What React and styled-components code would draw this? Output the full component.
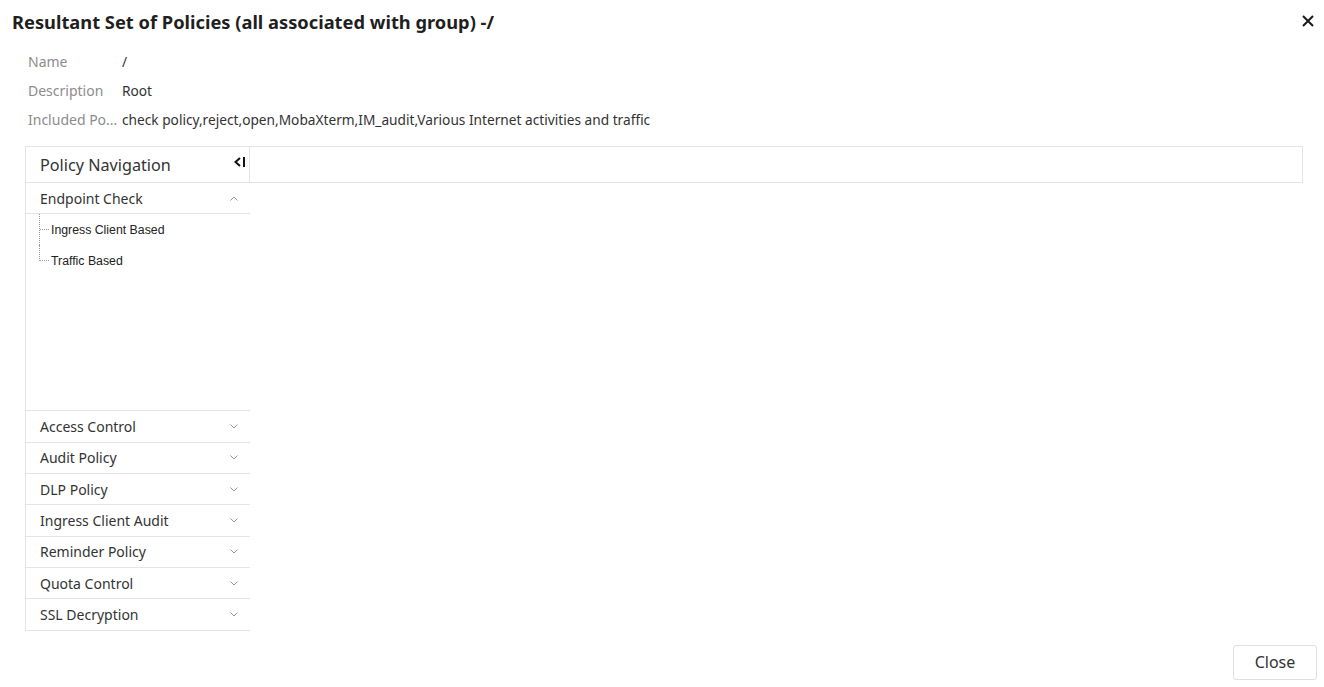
import React from "react";
import styled, { createGlobalStyle } from "styled-components";

const Global = createGlobalStyle`
  html, body { margin: 0; padding: 0; background: #fff; }
  body { font-family: "Noto Sans", "Open Sans", sans-serif; color: #333; }
  * { box-sizing: border-box; }
`;

const Dialog = styled.div`
  width: 1324px;
  height: 687px;
  display: flex;
  flex-direction: column;
  background: #fff;
`;

const Header = styled.div`
  height: 43px;
  display: flex;
  align-items: center;
  justify-content: space-between;
  padding: 0 8px 0 12px;
`;

const Title = styled.h1`
  margin: 0;
  font-size: 18.3px;
  font-weight: 700;
  color: #1f1f1f;
`;

const CloseX = styled.button`
  border: 0;
  background: none;
  padding: 0;
  width: 16px;
  height: 16px;
  display: flex;
  align-items: center;
  justify-content: center;
  cursor: pointer;
`;

const Body = styled.div`
  flex: 1;
  padding: 9px 21px 0 25px;
  display: flex;
  flex-direction: column;
`;

const InfoList = styled.div`
  display: grid;
  grid-template-columns: 94px 1fr;
  row-gap: 7px;
  padding-left: 3px;
  margin-bottom: 15px;
`;

const Label = styled.div`
  font-size: 14px;
  line-height: 22px;
  color: #8c8c8c;
  white-space: nowrap;
`;

const Value = styled.div`
  font-size: 13.7px;
  line-height: 22px;
  color: #333;
`;

const Split = styled.div`
  display: flex;
  align-items: flex-start;
`;

const Nav = styled.div`
  width: 225px;
  border-left: 1px solid #e2e3ec;
  display: flex;
  flex-direction: column;
`;

const NavHead = styled.div`
  height: 37px;
  display: flex;
  align-items: center;
  justify-content: space-between;
  padding: 0 3px 0 14px;
  border-top: 1px solid #e2e3ec;
  border-bottom: 1px solid #e2e3ec;
  font-size: 16.2px;
  color: #333;
`;

const CollapseIcon = styled.span`
  display: flex;
  align-items: center;
  margin-top: -5px;
`;

const Section = styled.div`
  height: ${(p) => p.$h || 31.3}px;
  border-bottom: 1px solid #e2e3ec;
  display: flex;
  align-items: center;
  justify-content: space-between;
  padding: 0 12px 0 14px;
  font-size: 14px;
  color: #333;
`;

const Tree = styled.div`
  height: 197px;
  border-bottom: 1px solid #e2e3ec;
  padding: 0 0 0 13px;
`;

const TreeItem = styled.div`
  position: relative;
  height: 31px;
  display: flex;
  align-items: center;
  padding-left: 12px;
  font-family: "Liberation Sans", Arial, sans-serif;
  font-size: 12.3px;
  color: #222;
  &::before {
    content: "";
    position: absolute;
    left: 0;
    top: 0;
    height: ${(p) => (p.$last ? "16px" : "31px")};
    border-left: 1px dotted #999;
  }
  &::after {
    content: "";
    position: absolute;
    left: 1px;
    top: 15px;
    width: 9px;
    border-top: 1px dotted #999;
  }
`;

const Content = styled.div`
  flex: 1;
  height: 37px;
  border: 1px solid #e2e3ec;
  margin-left: -1px;
`;

const Footer = styled.div`
  height: 57px;
  display: flex;
  align-items: flex-start;
  justify-content: flex-end;
  padding: 14px 7px 0 0;
`;

const Button = styled.button`
  width: 84px;
  height: 35px;
  border: 1px solid #dcdfe6;
  border-radius: 3px;
  background: #fff;
  font-family: "Noto Sans", "Open Sans", sans-serif;
  font-size: 16px;
  color: #333;
  cursor: pointer;
`;

const Chevron = ({ up }) => (
  <svg width="8" height="5" viewBox="0 0 8 5">
    <path
      d={up ? "M0.5 4.5 L4 1 L7.5 4.5" : "M0.5 0.5 L4 4 L7.5 0.5"}
      fill="none"
      stroke="#888"
      strokeWidth="0.9"
    />
  </svg>
);

const sections = [
  "Access Control",
  "Audit Policy",
  "DLP Policy",
  "Ingress Client Audit",
  "Reminder Policy",
  "Quota Control",
  "SSL Decryption",
];

export default function App() {
  return (
    <>
      <Global />
      <Dialog>
        <Header>
          <Title>Resultant Set of Policies (all associated with group) -/</Title>
          <CloseX aria-label="close">
            <svg width="12" height="12" viewBox="0 0 12 12">
              <path d="M1 1 L11 11 M11 1 L1 11" stroke="#1a1a1a" strokeWidth="2" />
            </svg>
          </CloseX>
        </Header>
        <Body>
          <InfoList>
            <Label>Name</Label>
            <Value>/</Value>
            <Label>Description</Label>
            <Value>Root</Value>
            <Label>Included Po...</Label>
            <Value>check policy,reject,open,MobaXterm,IM_audit,Various Internet activities and traffic</Value>
          </InfoList>
          <Split>
            <Nav>
              <NavHead>
                <span>Policy Navigation</span>
                <CollapseIcon>
                  <svg width="14" height="12" viewBox="0 0 14 12">
                    <path d="M7 2 L2.5 6 L7 10" fill="none" stroke="#111" strokeWidth="2" />
                    <path d="M11 1 L11 11" stroke="#111" strokeWidth="2" />
                  </svg>
                </CollapseIcon>
              </NavHead>
              <Section $h={31}>
                <span>Endpoint Check</span>
                <Chevron up />
              </Section>
              <Tree>
                <TreeItem>Ingress Client Based</TreeItem>
                <TreeItem $last>Traffic Based</TreeItem>
              </Tree>
              {sections.map((s) => (
                <Section key={s}>
                  <span>{s}</span>
                  <Chevron />
                </Section>
              ))}
            </Nav>
            <Content />
          </Split>
        </Body>
        <Footer>
          <Button>Close</Button>
        </Footer>
      </Dialog>
    </>
  );
}
